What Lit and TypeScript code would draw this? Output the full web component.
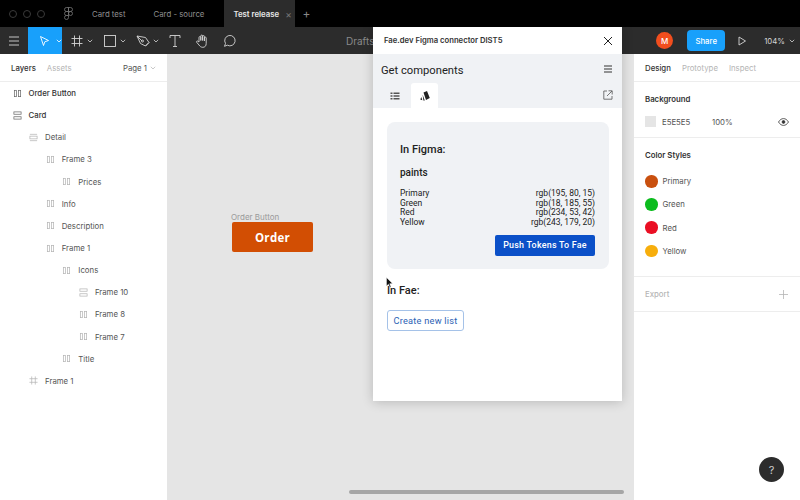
import { LitElement, html, css, svg } from 'lit';
import { customElement } from 'lit/decorators.js';

type Layer = { name: string; depth: number; icon: 'h' | 'v' | 'lines' | 'frame'; strong?: boolean };

const layers: Layer[] = [
  { name: 'Order Button', depth: 0, icon: 'h', strong: true },
  { name: 'Card', depth: 0, icon: 'v', strong: true },
  { name: 'Detail', depth: 1, icon: 'lines' },
  { name: 'Frame 3', depth: 2, icon: 'h' },
  { name: 'Prices', depth: 3, icon: 'h' },
  { name: 'Info', depth: 2, icon: 'h' },
  { name: 'Description', depth: 2, icon: 'h' },
  { name: 'Frame 1', depth: 2, icon: 'h' },
  { name: 'Icons', depth: 3, icon: 'h' },
  { name: 'Frame 10', depth: 4, icon: 'v' },
  { name: 'Frame 8', depth: 4, icon: 'h' },
  { name: 'Frame 7', depth: 4, icon: 'h' },
  { name: 'Title', depth: 3, icon: 'h' },
  { name: 'Frame 1', depth: 1, icon: 'frame' },
];

const styles = [
  { name: 'Primary', color: '#c9500f' },
  { name: 'Green', color: '#0cbc1e' },
  { name: 'Red', color: '#ea0f24' },
  { name: 'Yellow', color: '#f7ae0c' },
];

const paints = [
  ['Primary', 'rgb(195, 80, 15)'],
  ['Green', 'rgb(18, 185, 55)'],
  ['Red', 'rgb(234, 53, 42)'],
  ['Yellow', 'rgb(243, 179, 20)'],
];

const layerIcon = (kind: Layer['icon'], strong = false) => {
  const c = strong ? '#666' : '#b4b4b4';
  const shapes = {
    h: svg`<rect x="1.5" y="1.5" width="2.5" height="7" /><rect x="6" y="1.5" width="2.5" height="7" />`,
    v: svg`<rect x="1" y="1" width="8" height="2.6" /><rect x="1" y="6.4" width="8" height="2.6" />`,
    lines: svg`<path d="M1 1.5h8M1 8.5h8" /><rect x="1" y="3.5" width="8" height="3" />`,
    frame: svg`<path d="M3 0.5v9M7 0.5v9M0.5 3h9M0.5 7h9" />`,
  };
  return html`<svg class="layer-icon" viewBox="0 0 10 10" fill="none" stroke=${c} stroke-width="0.8">${shapes[kind]}</svg>`;
};

const chevron = html`<svg class="chev" viewBox="0 0 6 4" fill="none" stroke="currentColor" stroke-width="0.8"><path d="M0.8 0.8 3 3 5.2 0.8" /></svg>`;

@customElement('app-root')
export class AppRoot extends LitElement {
  static styles = css`
    :host {
      display: block;
      position: relative;
      width: 800px;
      height: 500px;
      overflow: hidden;
      font-family: Inter, 'Liberation Sans', sans-serif;
      font-size: 7.8px;
      color: #333;
    }
    .shell {
      display: flex;
      flex-direction: column;
      height: 100%;
    }
    .tabs {
      display: flex;
      align-items: stretch;
      height: 27px;
      flex: none;
      background: #000;
      color: #8f8f8f;
    }
    .lights {
      display: flex;
      gap: 6px;
      align-items: center;
      padding-left: 9px;
      width: 64px;
      box-sizing: border-box;
    }
    .lights i {
      width: 8px;
      height: 8px;
      border: 1px solid #3a3a3a;
      border-radius: 50%;
      box-sizing: border-box;
    }
    .figma-mark {
      width: 9px;
      height: 13px;
      align-self: center;
      margin-right: 19px;
    }
    .tab {
      display: flex;
      align-items: center;
      white-space: nowrap;
    }
    .tab.first {
      margin-right: 28px;
    }
    .tab.second {
      margin-right: 20px;
    }
    .tab.active {
      width: 71px;
      padding-left: 9px;
      box-sizing: border-box;
      background: #2c2c2c;
      color: #e8e8e8;
      font-weight: 600;
      gap: 6px;
    }
    .tab-x {
      color: #777;
      font-size: 10px;
      font-weight: 400;
    }
    .tab-plus {
      display: flex;
      align-items: center;
      margin-left: 7px;
      color: #888;
      font-size: 12px;
    }
    .toolbar {
      display: flex;
      align-items: center;
      height: 27px;
      flex: none;
      background: #2c2c2c;
      color: #d5d5d5;
    }
    .burger {
      width: 28px;
      height: 12px;
    }
    .tool {
      display: flex;
      align-items: center;
      gap: 3px;
      height: 100%;
    }
    .tool svg.main {
      width: 14px;
      height: 14px;
    }
    .tool.active {
      width: 34px;
      box-sizing: border-box;
      padding-left: 8px;
      gap: 3px;
      background: #18a0fb;
      color: #fff;
      margin-right: 8px;
    }
    .chev {
      width: 6px;
      height: 4px;
    }
    .drafts {
      margin-left: 110px;
      font-size: 10px;
      color: #8a8a8a;
    }
    .tool-right {
      margin-left: auto;
      display: flex;
      align-items: center;
      height: 100%;
    }
    .avatar {
      width: 17px;
      height: 17px;
      border-radius: 50%;
      background: #f24e1e;
      color: #fff;
      font-size: 8px;
      font-weight: 500;
      display: flex;
      align-items: center;
      justify-content: center;
      margin-right: 14px;
    }
    .share {
      width: 38px;
      height: 21px;
      background: #18a0fb;
      color: #fff;
      border-radius: 4px;
      font-size: 7.8px;
      font-weight: 500;
      display: flex;
      align-items: center;
      justify-content: center;
      margin-right: 12px;
    }
    .play {
      width: 10px;
      height: 10px;
      margin-right: 17px;
    }
    .zoom {
      margin-right: 4px;
    }
    .tool-right .chev {
      margin-right: 5px;
    }
    .main {
      display: flex;
      flex: 1;
      min-height: 0;
    }
    .left {
      width: 167px;
      flex: none;
      background: #fff;
    }
    .panel-head {
      display: flex;
      align-items: center;
      height: 28px;
      box-sizing: border-box;
      border-bottom: 1px solid #ededed;
      padding: 0 11px;
      gap: 11px;
      font-weight: 500;
    }
    .muted {
      color: #b5b5b5;
      font-weight: 400;
    }
    .page {
      margin-left: auto;
      display: flex;
      align-items: center;
      gap: 3px;
      color: #555;
      font-weight: 400;
    }
    .page .chev {
      color: #bbb;
    }
    .layer {
      display: flex;
      align-items: center;
      height: 22.15px;
      gap: 7px;
      color: #555;
    }
    .layer.strong {
      color: #333;
      font-weight: 500;
    }
    .layer-icon {
      width: 9px;
      height: 9px;
      flex: none;
    }
    .canvas {
      flex: 1;
      position: relative;
      background: #e5e5e5;
    }
    .node {
      position: absolute;
      left: 64px;
      top: 158px;
    }
    .node-label {
      font-size: 8px;
      line-height: 10px;
      color: #9a9a9a;
    }
    .node-button {
      width: 81px;
      height: 30px;
      margin-left: 1px;
      border-radius: 2px;
      background: #d24e03;
      color: #fff;
      font-family: 'Open Sans', sans-serif;
      font-size: 11.5px;
      font-weight: 700;
      letter-spacing: 0.3px;
      display: flex;
      align-items: center;
      justify-content: center;
    }
    .scrollbar {
      position: absolute;
      left: 182px;
      top: 436px;
      width: 275px;
      height: 4px;
      border-radius: 2px;
      background: #a6a6a6;
    }
    .right {
      width: 166px;
      flex: none;
      background: #fff;
      position: relative;
    }
    .right .panel-head {
      padding-left: 11px;
      gap: 11px;
    }
    .section {
      padding: 0 11px;
      border-bottom: 1px solid #ededed;
    }
    .section:last-child {
      border-bottom: none;
    }
    .section h4 {
      margin: 0;
      font-size: 7.8px;
      font-weight: 600;
      line-height: 10px;
      color: #333;
    }
    .bg {
      height: 56px;
      padding-top: 12px;
      box-sizing: border-box;
    }
    .bg-row {
      display: flex;
      align-items: center;
      margin-top: 12px;
      color: #555;
    }
    .swatch {
      width: 11px;
      height: 11px;
      background: #e5e5e5;
      margin-right: 6px;
    }
    .hex {
      width: 50px;
    }
    .eye {
      width: 11px;
      height: 8px;
      margin-left: auto;
    }
    .color-styles {
      height: 139px;
      padding-top: 12px;
      box-sizing: border-box;
    }
    .style-list {
      display: flex;
      flex-direction: column;
      gap: 10.7px;
      margin-top: 15px;
    }
    .style {
      display: flex;
      align-items: center;
      gap: 5px;
      color: #555;
    }
    .dot {
      width: 12.5px;
      height: 12.5px;
      border-radius: 50%;
    }
    .export {
      display: flex;
      justify-content: space-between;
      align-items: center;
      height: 34px;
      color: #b5b5b5;
      font-weight: 500;
    }
    .export svg {
      width: 9px;
      height: 9px;
      margin-right: 1px;
    }
    .help {
      position: absolute;
      left: 125px;
      top: 403px;
      width: 25px;
      height: 25px;
      border-radius: 50%;
      background: #2c2c2c;
      color: #ccc;
      font-size: 11px;
      display: flex;
      align-items: center;
      justify-content: center;
    }
    /* plugin window floats over the editor */
    .plugin {
      position: absolute;
      left: 373px;
      top: 27px;
      width: 249px;
      height: 374px;
      background: #fff;
      box-shadow: 0 1px 11px rgba(0, 0, 0, 0.2);
      display: flex;
      flex-direction: column;
      font-family: Roboto, 'Liberation Sans', sans-serif;
      color: #222;
    }
    .plugin-title {
      display: flex;
      align-items: center;
      justify-content: space-between;
      height: 27px;
      flex: none;
      padding: 0 9px 0 11px;
      font-family: Inter, 'Liberation Sans', sans-serif;
      font-size: 7.7px;
      font-weight: 600;
      color: #333;
    }
    .plugin-title svg {
      width: 10px;
      height: 10px;
    }
    .plugin-head {
      flex: none;
      height: 54px;
      background: #f0f2f5;
      display: flex;
      flex-direction: column;
      box-sizing: border-box;
      padding: 0 9px 0 8px;
    }
    .plugin-top {
      display: flex;
      align-items: center;
      justify-content: space-between;
      height: 29px;
      font-size: 11.2px;
    }
    .plugin-top span {
      padding-top: 4px;
    }
    .hamb {
      width: 10px;
      height: 8px;
    }
    .plugin-tabs {
      display: flex;
      flex: 1;
      align-items: stretch;
    }
    .ptab {
      width: 27px;
      display: flex;
      align-items: center;
      justify-content: center;
    }
    .ptab svg {
      width: 10px;
      height: 10px;
    }
    .ptab.on {
      background: #fff;
      border-radius: 3px 3px 0 0;
      margin-left: 3px;
    }
    .ptab.on svg {
      width: 12px;
      height: 12px;
    }
    .popout {
      margin-left: auto;
      width: 10px;
      height: 10px;
      margin-top: 7px;
    }
    .plugin-body {
      flex: 1;
      padding: 14px 13px 0 14px;
    }
    .card {
      height: 147px;
      box-sizing: border-box;
      background: #f0f2f5;
      border-radius: 8px;
      padding: 21px 14px 0 13px;
    }
    .card h3,
    .plugin-body h3 {
      margin: 0;
      font-size: 11px;
      line-height: 14px;
      font-weight: 500;
      color: #222;
    }
    .card h5 {
      margin: 9px 0 0;
      font-size: 10px;
      line-height: 14px;
      font-weight: 500;
    }
    .paints {
      margin-top: 9px;
      font-size: 8.5px;
      line-height: 9.7px;
    }
    .paint {
      display: flex;
      justify-content: space-between;
    }
    .push {
      display: flex;
      justify-content: flex-end;
      margin-top: 7px;
    }
    .push button {
      width: 100px;
      height: 21px;
      border: none;
      border-radius: 2px;
      background: #0b50c8;
      color: #fff;
      font: 500 8.9px Roboto, sans-serif;
      letter-spacing: 0.25px;
      padding: 0;
    }
    .plugin-body h3.fae {
      margin-top: 15px;
    }
    .create {
      display: block;
      width: 77px;
      height: 21px;
      margin-top: 12px;
      box-sizing: border-box;
      padding: 0;
      border: 1px solid #a5c2e8;
      border-radius: 3px;
      background: #fff;
      color: #2c62b4;
      font: 400 9.2px Roboto, sans-serif;
      letter-spacing: 0.25px;
    }
    .cursor {
      position: absolute;
      left: 386px;
      top: 277px;
      width: 7px;
      height: 11px;
    }
  `;

  render() {
    return html`
      <div class="shell">
        <div class="tabs">
          <div class="lights"><i></i><i></i><i></i></div>
          <svg class="figma-mark" viewBox="0 0 8 13" fill="none" stroke="#777" stroke-width="0.8">
            <path d="M4 .5H2a2 2 0 0 0 0 4h2zM4 .5h2a2 2 0 0 1 0 4H4zM4 4.500H2a2 2 0 0 0 0 4h2zM4 8.500H2a2 2 0 1 0 2 2zM8 6.500a2 2 0 1 1-4 0 2 2 0 0 1 4 0z" />
          </svg>
          <div class="tab first">Card test</div>
          <div class="tab second">Card - source</div>
          <div class="tab active">Test release <span class="tab-x">×</span></div>
          <div class="tab-plus">+</div>
        </div>

        <div class="toolbar">
          <svg class="burger" viewBox="0 0 28 12" fill="none" stroke="#d5d5d5" stroke-width="0.9"><path d="M9 2h10M9 6h10M9 10h10" /></svg>
          <div class="tool active">
            <svg class="main" viewBox="0 0 14 14" fill="none" stroke="currentColor" stroke-width="0.9"><path d="M3 2.500 11 6.500 7.300 7.800 6 11.500z" /></svg>
            ${chevron}
          </div>
          <div class="tool" style="margin-right:10px">
            <svg class="main" viewBox="0 0 14 14" fill="none" stroke="currentColor" stroke-width="0.9"><path d="M4.500 1.500v11M9.500 1.500v11M1.500 4.500h11M1.500 9.500h11" /></svg>
            ${chevron}
          </div>
          <div class="tool" style="margin-right:10px">
            <svg class="main" viewBox="0 0 14 14" fill="none" stroke="currentColor" stroke-width="0.9"><rect x="1.500" y="1.500" width="11" height="11" /></svg>
            ${chevron}
          </div>
          <div class="tool" style="margin-right:9px">
            <svg class="main" viewBox="0 0 14 14" fill="none" stroke="currentColor" stroke-width="0.9"><path d="M1 2l8.500 1.500 3.500 5-3.500 3.500-5-2.500zM1 2l5 5M13 8.500 9.500 12" /><circle cx="6.500" cy="7" r="1" /></svg>
            ${chevron}
          </div>
          <div class="tool" style="margin-right:13px">
            <svg class="main" viewBox="0 0 14 14" fill="none" stroke="currentColor" stroke-width="0.9"><path d="M2 4V1.500h10V4M7 1.500v11M5 12.500h4" /></svg>
          </div>
          <div class="tool" style="margin-right:13px">
            <svg class="main" viewBox="0 0 14 14" fill="none" stroke="currentColor" stroke-width="0.9"><path d="M4 8V3.500a.9.9 0 0 1 1.800 0V6.500V2a.9.900 0 0 1 1.800 0v4.500V2.500a.9.9 0 0 1 1.800 0v4.500V4a.9.9 0 0 1 1.800 0v5.500C11.200 12 9.800 13.300 7.800 13.300 5.800 13.300 5 12.300 4 11L1.700 8.300c-.6-.8.400-1.800 1.200-1.100z" /></svg>
          </div>
          <div class="tool">
            <svg class="main" viewBox="0 0 14 14" fill="none" stroke="currentColor" stroke-width="0.9"><path d="M2.500 12.300l1-2.900A5.200 5.200 0 1 1 5.400 11.200z" /></svg>
          </div>
          <div class="drafts">Drafts</div>
          <div class="tool-right">
            <div class="avatar">M</div>
            <div class="share">Share</div>
            <svg class="play" viewBox="0 0 10 10" fill="none" stroke="#d5d5d5" stroke-width="0.9"><path d="M2 1l6.500 4L2 9z" /></svg>
            <span class="zoom">104%</span>
            ${chevron}
          </div>
        </div>

        <div class="main">
          <div class="left">
            <div class="panel-head">
              <span>Layers</span><span class="muted">Assets</span>
              <span class="page">Page 1 ${chevron}</span>
            </div>
            ${layers.map(
              (l) => html`
                <div class="layer ${l.strong ? 'strong' : ''}" style="padding-left:${12.5 + l.depth * 16.6}px">
                  ${layerIcon(l.icon, l.strong)}<span>${l.name}</span>
                </div>
              `
            )}
          </div>

          <div class="canvas">
            <div class="node">
              <div class="node-label">Order Button</div>
              <div class="node-button">Order</div>
            </div>
            <div class="scrollbar"></div>
          </div>

          <div class="right">
            <div class="panel-head">
              <span>Design</span><span class="muted">Prototype</span><span class="muted">Inspect</span>
            </div>
            <div class="section bg">
              <h4>Background</h4>
              <div class="bg-row">
                <div class="swatch"></div>
                <span class="hex">E5E5E5</span><span>100%</span>
                <svg class="eye" viewBox="0 0 11 8" fill="none" stroke="#333" stroke-width="0.8"><path d="M.5 4C2 1.600 3.600.6 5.500.6S9 1.600 10.500 4C9 6.400 7.400 7.400 5.500 7.400S2 6.400.5 4z" /><circle cx="5.500" cy="4" r="1.400" fill="#333" /></svg>
              </div>
            </div>
            <div class="section color-styles">
              <h4>Color Styles</h4>
              <div class="style-list">
                ${styles.map(
                  (s) => html`<div class="style"><span class="dot" style="background:${s.color}"></span>${s.name}</div>`
                )}
              </div>
            </div>
            <div class="section export">
              <span>Export</span>
              <svg viewBox="0 0 9 9" fill="none" stroke="#b5b5b5" stroke-width="0.8"><path d="M4.500 0v9M0 4.500h9" /></svg>
            </div>
            <div class="help">?</div>
          </div>
        </div>
      </div>

      <div class="plugin">
        <div class="plugin-title">
          <span>Fae.dev Figma connector DIST5</span>
          <svg viewBox="0 0 10 10" fill="none" stroke="#222" stroke-width="1"><path d="M1 1l8 8M9 1l-8 8" /></svg>
        </div>
        <div class="plugin-head">
          <div class="plugin-top">
            <span>Get components</span>
            <svg class="hamb" viewBox="0 0 10 8" fill="none" stroke="#333" stroke-width="1.100"><path d="M1 1h8M1 4h8M1 7h8" /></svg>
          </div>
          <div class="plugin-tabs">
            <div class="ptab">
              <svg viewBox="0 0 10 10" fill="#555"><path d="M0.500 1.500h2v1.500h-2zM3.500 1.500h6v1.500h-6zM0.500 4.200h2v1.500h-2zM3.500 4.200h6v1.500h-6zM0.500 7h2v1.500h-2zM3.500 7h6v1.500h-6z" /></svg>
            </div>
            <div class="ptab on">
              <svg viewBox="0 0 12 12" fill="#222"><path d="M4.500 2.500 8 1 10.800 8 7 10zM3.600 4.800 5.800 10.500 4.400 10.500zM2.300 7 3.300 10.300 1.300 9.600z" /></svg>
            </div>
            <svg class="popout" viewBox="0 0 10 10" fill="none" stroke="#555" stroke-width="0.8"><path d="M4 1H.8v8.200H9V6M5.500 .8h3.700v3.700M9 1 4 6" /></svg>
          </div>
        </div>
        <div class="plugin-body">
          <div class="card">
            <h3>In Figma:</h3>
            <h5>paints</h5>
            <div class="paints">
              ${paints.map(([n, v]) => html`<div class="paint"><span>${n}</span><span>${v}</span></div>`)}
            </div>
            <div class="push"><button>Push Tokens To Fae</button></div>
          </div>
          <h3 class="fae">In Fae:</h3>
          <button class="create">Create new list</button>
        </div>
      </div>

      <svg class="cursor" viewBox="0 0 7 11" fill="#111" stroke="#fff" stroke-width="0.4"><path d="M0.500 0.500 6.500 6.500 3.700 6.700 5 10 3.800 10.500 2.500 7.200 0.500 9z" /></svg>
    `;
  }
}
